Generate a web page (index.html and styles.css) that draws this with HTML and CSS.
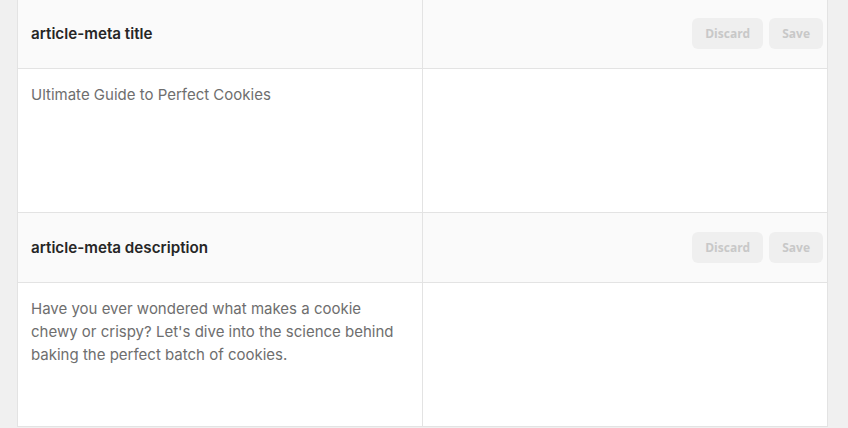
FILE: index.html
```html
<!DOCTYPE html>
<html lang="en">
<head>
<meta charset="utf-8">
<title>Article meta</title>
<link rel="stylesheet" href="styles.css">
</head>
<body>
<div class="panel">
  <div class="section">
    <div class="cell head">article-meta title</div>
    <div class="cell head actions">
      <button class="btn">Discard</button>
      <button class="btn">Save</button>
    </div>
    <div class="cell body">Ultimate Guide to Perfect Cookies</div>
    <div class="cell body"></div>
  </div>
  <div class="section">
    <div class="cell head">article-meta description</div>
    <div class="cell head actions">
      <button class="btn">Discard</button>
      <button class="btn">Save</button>
    </div>
    <div class="cell body">Have you ever wondered what makes a cookie chewy or crispy? Let's dive into the science behind baking the perfect batch of cookies.</div>
    <div class="cell body"></div>
  </div>
</div>
</body>
</html>
```

FILE: styles.css
```css
html, body {
  margin: 0;
  padding: 0;
  background: #f0f0f0;
  font-family: Inter, "Noto Sans", sans-serif;
}
.panel {
  margin: -1px 0 0 17px;
  width: 811px;
  box-sizing: border-box;
  background: #fff;
  border-left: 1px solid #e3e3e3;
  border-right: 1px solid #e3e3e3;
}
.section {
  display: grid;
  grid-template-columns: 1fr 1fr;
}
.cell {
  box-sizing: border-box;
  border-bottom: 1px solid #e3e3e3;
}
.cell:nth-child(odd) {
  border-right: 1px solid #e3e3e3;
}
.head {
  height: 70px;
  background: #fafafa;
  display: flex;
  align-items: center;
  padding: 0 13px;
  font-size: 15.2px;
  font-weight: 600;
  color: #262626;
}
.actions {
  justify-content: flex-end;
  gap: 6px;
  padding-right: 4px;
}
.btn {
  font-family: "Open Sans", sans-serif;
  font-size: 12px;
  font-weight: 700;
  color: #c8c8c8;
  background: #efefef;
  border: none;
  border-radius: 6px;
  height: 31px;
  padding: 0 13px;
  cursor: default;
}
.body {
  height: 144px;
  padding: 14px 13px;
  font-size: 15px;
  line-height: 23px;
  color: #6e6e6e;
}
```
